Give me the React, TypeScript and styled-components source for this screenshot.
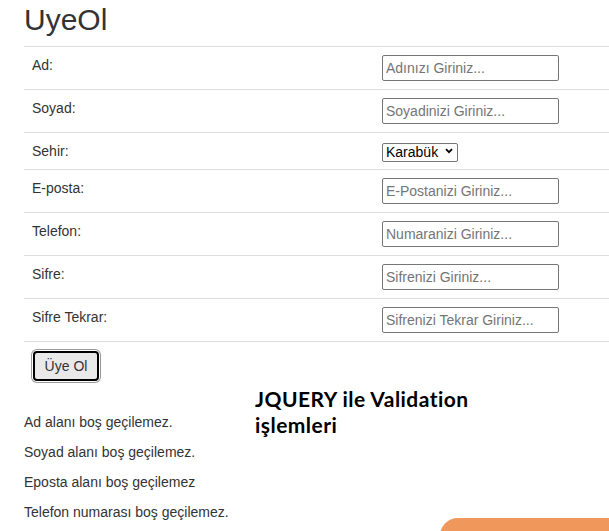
import React from "react";
import styled, { createGlobalStyle } from "styled-components";

const Global = createGlobalStyle`
  html, body { margin: 0; padding: 0; background: #fff; }
  body {
    font-family: "Liberation Sans", Arial, sans-serif;
    font-size: 14px;
    line-height: 20px;
    color: #333;
  }
`;

const Page = styled.div`
  position: relative;
  min-height: 531px;
  padding-left: 24px;
  overflow: hidden;
`;

const Title = styled.h2`
  margin: 3px 0 10px;
  font-size: 30px;
  font-weight: 500;
  line-height: 33px;
  color: #333;
`;

const Table = styled.table`
  width: 100%;
  border-collapse: collapse;
  border-spacing: 0;
`;

const Row = styled.tr`
  border-top: 1px solid #ddd;
  &:last-child { border-bottom: 1px solid #ddd; }
`;

const LabelCell = styled.td`
  width: 334px;
  padding: 8px;
  vertical-align: top;
  line-height: 20px;
`;

const FieldCell = styled.td`
  padding: 8px;
  vertical-align: top;
  line-height: 20px;
`;

const TextInput = styled.input`
  display: block;
  box-sizing: border-box;
  width: 177px;
  height: 26px;
  margin: 0;
  padding: 0 3px;
  border: 1px solid #767676;
  border-radius: 2px;
  font-family: "Liberation Sans", Arial, sans-serif;
  font-size: 14px;
  color: #333;
  background: #fff;
  &::placeholder { color: #757575; }
`;

const SelectWrap = styled.span`
  position: relative;
  display: inline-block;
  margin-top: 1px;
  height: 19px;
  vertical-align: top;
`;

const Select = styled.select`
  appearance: none;
  -webkit-appearance: none;
  box-sizing: border-box;
  width: 76px;
  height: 19px;
  margin: 0;
  padding: 0 0 0 3px;
  border: 1px solid #767676;
  border-radius: 2px;
  background: #fff;
  font-family: "Liberation Sans", Arial, sans-serif;
  font-size: 14px;
  line-height: 17px;
  color: #000;
`;

const Chevron = styled.svg`
  position: absolute;
  right: 5px;
  top: 6px;
  width: 8px;
  height: 6px;
  pointer-events: none;
`;

const Bottom = styled.div`
  display: grid;
  grid-template-columns: 231px 1fr;
`;

const LeftCol = styled.div`
  display: flex;
  flex-direction: column;
  align-items: flex-start;
`;

const SubmitButton = styled.button`
  box-sizing: border-box;
  margin: 9px 0 0 9px;
  width: 66px;
  height: 30px;
  padding: 0;
  border: 2px solid #000;
  border-radius: 4px;
  background: #e9e9e9;
  box-shadow: 0 0 0 1px #fff, 0 0 0 2px #9a9a9a;
  font-family: "Liberation Sans", Arial, sans-serif;
  font-size: 14px;
  color: #333;
`;

const Messages = styled.div`
  margin-top: 31px;
`;

const Message = styled.p`
  margin: 0 0 10px;
  font-size: 14px;
  line-height: 20px;
  color: #333;
  white-space: nowrap;
`;

const Heading = styled.div`
  margin-top: 44px;
  font-family: Lato, "Open Sans", sans-serif;
  font-weight: 700;
  font-size: 21px;
  letter-spacing: 0.45px;
  line-height: 26px;
  color: #000;
  width: 240px;
`;

const Corner = styled.div`
  position: absolute;
  left: 440px;
  top: 518px;
  right: 0;
  height: 40px;
  background: #f0975c;
  border-top-left-radius: 18px;
`;

const fields = [
  { label: "Ad:", placeholder: "Adınızı Giriniz..." },
  { label: "Soyad:", placeholder: "Soyadinizi Giriniz..." },
  { label: "Sehir:", select: true },
  { label: "E-posta:", placeholder: "E-Postanizi Giriniz..." },
  { label: "Telefon:", placeholder: "Numaranizi Giriniz..." },
  { label: "Sifre:", placeholder: "Sifrenizi Giriniz..." },
  { label: "Sifre Tekrar:", placeholder: "Sifrenizi Tekrar Giriniz..." },
];

const messages = [
  "Ad alanı boş geçilemez.",
  "Soyad alanı boş geçilemez.",
  "Eposta alanı boş geçilemez",
  "Telefon numarası boş geçilemez.",
];

export default function App() {
  return (
    <>
      <Global />
      <Page>
        <Title>UyeOl</Title>
        <Table>
          <tbody>
            {fields.map((f) => (
              <Row key={f.label}>
                <LabelCell>{f.label}</LabelCell>
                <FieldCell>
                  {f.select ? (
                    <SelectWrap>
                      <Select defaultValue="Karabük">
                        <option>Karabük</option>
                        <option>Ankara</option>
                        <option>İstanbul</option>
                      </Select>
                      <Chevron viewBox="0 0 8 6">
                        <path d="M1 1.2 L4 4.2 L7 1.2" fill="none" stroke="#000" strokeWidth="1.8" />
                      </Chevron>
                    </SelectWrap>
                  ) : (
                    <TextInput placeholder={f.placeholder} />
                  )}
                </FieldCell>
              </Row>
            ))}
          </tbody>
        </Table>
        <Bottom>
          <LeftCol>
            <SubmitButton>Üye Ol</SubmitButton>
            <Messages>
              {messages.map((m) => (
                <Message key={m}>{m}</Message>
              ))}
            </Messages>
          </LeftCol>
          <Heading>
            JQUERY ile Validation
            <br />
            işlemleri
          </Heading>
        </Bottom>
        <Corner />
      </Page>
    </>
  );
}
